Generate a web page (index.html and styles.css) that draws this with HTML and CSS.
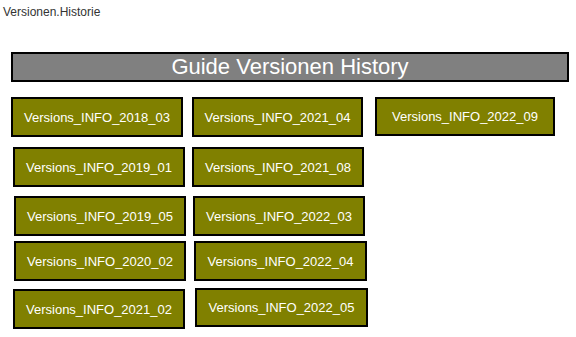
FILE: index.html
```html
<!DOCTYPE html>
<html>
<head>
  <title>Versionen.Historie</title>
  <link rel="stylesheet" href="styles.css">
</head>
<body>
  <div class="page-title">Versionen.Historie</div>
  <div class="diagram">
    <div class="banner">Guide Versionen History</div>
    <div class="node n-2018-03">Versions_INFO_2018_03</div>
    <div class="node n-2021-04">Versions_INFO_2021_04</div>
    <div class="node n-2022-09">Versions_INFO_2022_09</div>
    <div class="node n-2019-01">Versions_INFO_2019_01</div>
    <div class="node n-2021-08">Versions_INFO_2021_08</div>
    <div class="node n-2019-05">Versions_INFO_2019_05</div>
    <div class="node n-2022-03">Versions_INFO_2022_03</div>
    <div class="node n-2020-02">Versions_INFO_2020_02</div>
    <div class="node n-2022-04">Versions_INFO_2022_04</div>
    <div class="node n-2021-02">Versions_INFO_2021_02</div>
    <div class="node n-2022-05">Versions_INFO_2022_05</div>
  </div>
</body>
</html>
```

FILE: styles.css
```css
body {
  margin: 0;
  font-family: "Liberation Sans", Arial, sans-serif;
  background: #fff;
}
.page-title {
  height: 40px;
  box-sizing: border-box;
  padding: 5px 3px 0;
  font-size: 12px;
  line-height: 14px;
  color: #333;
}
.diagram {
  position: relative;
  box-sizing: border-box;
  height: 297px;
  padding-top: 12px;
}
.banner {
  box-sizing: border-box;
  margin-left: 11px;
  width: 558px;
  height: 30px;
  border: 2px solid #000;
  background-color: #808080;
  color: #fff;
  font-size: 22px;
  line-height: 26px;
  text-align: center;
}

/* diagram nodes */
.node {
  position: absolute;
  box-sizing: border-box;
  width: 172px;
  height: 40px;
  border: 2px solid #000;
  background-color: #808000;
  color: #fff;
  font-size: 13px;
  display: flex;
  align-items: center;
  justify-content: center;
}
.n-2018-03 { left: 11px; top: 57px; }
.n-2021-04 { left: 192px; top: 57px; width: 171px; }
.n-2022-09 { left: 375px; top: 57px; width: 180px; height: 39px; }
.n-2019-01 { left: 13px; top: 107px; }
.n-2021-08 { left: 192px; top: 107px; }
.n-2019-05 { left: 14px; top: 156px; }
.n-2022-03 { left: 193px; top: 156px; }
.n-2020-02 { left: 14px; top: 201px; }
.n-2022-04 { left: 194px; top: 201px; width: 173px; }
.n-2021-02 { left: 13px; top: 249px; }
.n-2022-05 { left: 195px; top: 248px; width: 173px; height: 39px; }
```
